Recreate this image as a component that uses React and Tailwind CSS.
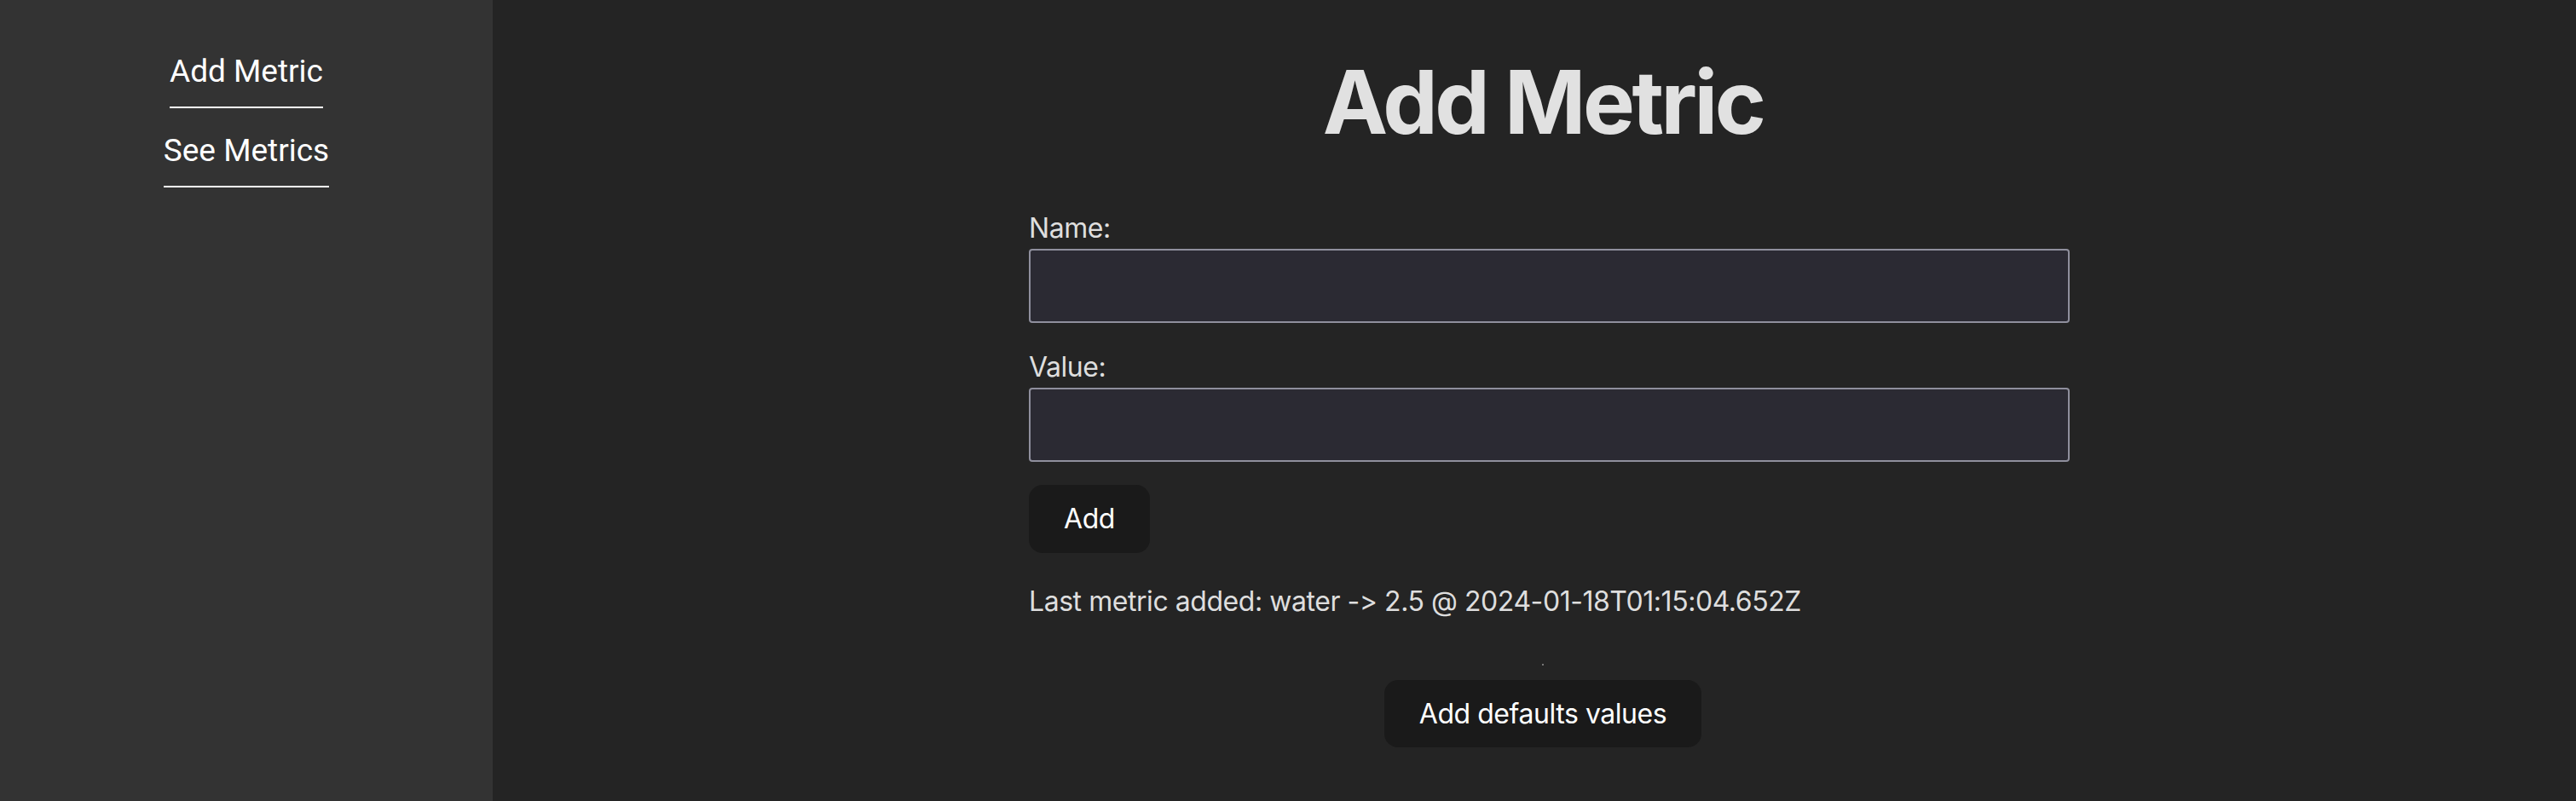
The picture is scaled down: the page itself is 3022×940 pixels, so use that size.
import React, { useState } from 'react';

const Sidebar = () => {
  const links = ['Add Metric', 'See Metrics'];
  return (
    <aside className="w-[578px] shrink-0 bg-[#333333] flex flex-col items-center gap-[28px] pt-[62px] font-['Roboto',sans-serif] tracking-normal">
      {links.map(label => (
        <a key={label} href="#" className="inline-block text-[37px] leading-[43px] text-white border-b-2 border-white pb-[20px]">
          {label}
        </a>
      ))}
    </aside>
  );
};

const App = () => {
  const [name, setName] = useState('');
  const [value, setValue] = useState('');

  return (
    <div className="flex h-[940px] w-full bg-[#242424] font-['Inter',sans-serif] [font-feature-settings:'calt'_0] text-[#dedede] tracking-[-0.45px] overflow-hidden">
      <Sidebar />
      <main className="flex-1 flex flex-col items-center pl-[20px]">
        <h1 className="mt-[64px] text-[102.4px] leading-[112px] font-bold tracking-[-3.5px] text-[#e1e1e1]">Add Metric</h1>

        <div className="ml-[15px] w-[1221px] mt-[68px] flex flex-col">
          <label className="text-[32px] leading-[48px]">Name:</label>
          <input
            value={name}
            onChange={e => setName(e.target.value)}
            className="h-[87px] w-full border-2 border-[#8f8f9d] bg-[#2b2a33] rounded-[4px] px-[8px] text-[32px] text-white outline-none"
          />
          <label className="mt-[28px] text-[32px] leading-[48px]">Value:</label>
          <input
            value={value}
            onChange={e => setValue(e.target.value)}
            className="h-[87px] w-full border-2 border-[#8f8f9d] bg-[#2b2a33] rounded-[4px] px-[8px] text-[32px] text-white outline-none"
          />
          <button className="mt-[27px] self-start h-[80px] px-[41px] rounded-[16px] bg-[#1a1a1a] text-white text-[32px] flex items-center">
            Add
          </button>
          <p className="mt-[33px] text-[32px] leading-[48px]">Last metric added: water -&gt; 2.5 @ 2024-01-18T01:15:04.652Z</p>
        </div>

        <div className="mt-[49px] h-[2px] w-[2px] bg-[#777777]"></div>
        <button className="mt-[17px] h-[79px] px-[41px] rounded-[16px] bg-[#1a1a1a] text-white text-[32px] flex items-center">
          Add defaults values
        </button>
      </main>
    </div>
  );
};

export default App;
